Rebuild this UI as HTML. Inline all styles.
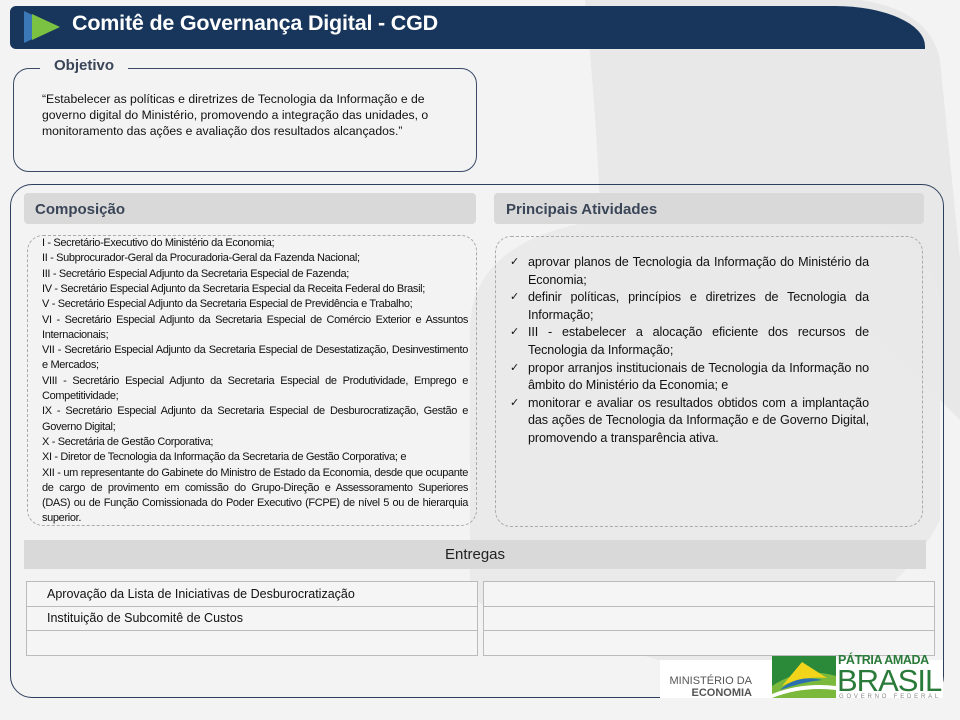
<!DOCTYPE html>
<html><head><meta charset="utf-8">
<style>
*{margin:0;padding:0;box-sizing:border-box}
body{width:960px;height:720px;overflow:hidden;background:#f3f3f3;font-family:"Liberation Sans",sans-serif;position:relative;color:#111}
.abs{position:absolute}
.hdr{left:10px;top:6px;width:915px;height:43px;background:#18365c;border-radius:6px 90px 0 6px / 6px 40px 0 6px}
.title{left:72px;top:11px;color:#fff;font-size:21.5px;font-weight:bold;letter-spacing:-0.2px}
.obj{left:13px;top:68px;width:464px;height:104px;border:1px solid #3a4a66;border-radius:16px}
.objlbl{left:40px;top:57px;background:#f3f3f3;padding:0 14px;font-weight:bold;font-size:15px;color:#3a4658}
.objtxt{left:42px;top:91px;width:425px;font-size:12.2px;line-height:16px}
.outer{left:10px;top:184px;width:934px;height:514px;border:1px solid #2e3f5e;border-radius:22px}
.bar{background:#d9d9d9;border-radius:4px;font-weight:bold;font-size:15px;color:#3a4658}
.dash{border:1px dashed #aaa;border-radius:16px}
.c{position:absolute;left:42px;width:426px;font-size:11px;line-height:15.3px;letter-spacing:-0.35px;text-align:justify;white-space:normal}
.act{left:528px;top:254px;width:341px;font-size:12.6px;line-height:17.6px;text-align:justify;letter-spacing:-0.1px}
.act div{position:relative}
.act div:before{content:"✓";position:absolute;left:-18px;font-size:11px}
table{border-collapse:collapse}
td{border:1.5px solid #bbb;height:24.5px;font-size:12.5px;padding-left:20px;background:#f5f5f5}
</style></head><body>
<svg class="abs" style="left:0;top:0" width="960" height="720">
<path d="M585 0 L860 0 Q930 10 940 60 L960 260 L960 420 Q920 380 870 330 L600 330 Q605 200 585 0Z" fill="#e8e8e8"/>
<path d="M470 330 Q470 240 600 220 L870 220 Q930 240 940 300 L940 520 Q890 620 720 680 L470 600Z" fill="#e9e9e9" opacity="0.9"/>
</svg>
<div class="abs hdr"></div>
<svg class="abs" style="left:22px;top:11px" width="42" height="32"><polygon points="2,0 36,16 2,32" fill="#3a78b8"/><polygon points="10,3 38,16 10,29" fill="#7cc242"/></svg>
<div class="abs title">Comitê de Governança Digital - CGD</div>
<div class="abs obj"></div>
<div class="abs objlbl">Objetivo</div>
<div class="abs objtxt">“Estabelecer as políticas e diretrizes de Tecnologia da Informação e de governo digital do Ministério, promovendo a integração das unidades, o monitoramento das ações e avaliação dos resultados alcançados.”</div>
<div class="abs outer"></div>
<div class="abs bar" style="left:24px;top:193px;width:452px;height:31px;padding:8px 11px">Composição</div>
<div class="abs bar" style="left:494px;top:193px;width:430px;height:31px;padding:8px 12px">Principais Atividades</div>
<div class="abs dash" style="left:27px;top:235px;width:450px;height:291px"></div>
<div class="abs dash" style="left:495px;top:236px;width:428px;height:291px"></div>
<div class="c" style="top:236px">I - Secretário-Executivo do Ministério da Economia;</div>
<div class="c" style="top:251.3px">II - Subprocurador-Geral da Procuradoria-Geral da Fazenda Nacional;</div>
<div class="c" style="top:266.6px">III - Secretário Especial Adjunto da Secretaria Especial de Fazenda;</div>
<div class="c" style="top:281.9px">IV - Secretário Especial Adjunto da Secretaria Especial da Receita Federal do Brasil;</div>
<div class="c" style="top:297.2px">V - Secretário Especial Adjunto da Secretaria Especial de Previdência e Trabalho;</div>
<div class="c" style="top:312.5px">VI - Secretário Especial Adjunto da Secretaria Especial de Comércio Exterior e Assuntos Internacionais;</div>
<div class="c" style="top:343.1px">VII - Secretário Especial Adjunto da Secretaria Especial de Desestatização, Desinvestimento e Mercados;</div>
<div class="c" style="top:373.7px">VIII - Secretário Especial Adjunto da Secretaria Especial de Produtividade, Emprego e Competitividade;</div>
<div class="c" style="top:404.3px">IX - Secretário Especial Adjunto da Secretaria Especial de Desburocratização, Gestão e Governo Digital;</div>
<div class="c" style="top:434.9px">X - Secretária de Gestão Corporativa;</div>
<div class="c" style="top:450.2px">XI - Diretor de Tecnologia da Informação da Secretaria de Gestão Corporativa; e</div>
<div class="c" style="top:465.5px">XII - um representante do Gabinete do Ministro de Estado da Economia, desde que ocupante de cargo de provimento em comissão do Grupo-Direção e Assessoramento Superiores (DAS) ou de Função Comissionada do Poder Executivo (FCPE) de nível 5 ou de hierarquia superior.</div>
<div class="abs act"><div>aprovar planos de Tecnologia da Informação do Ministério da Economia;</div><div>definir políticas, princípios e diretrizes de Tecnologia da Informação;</div><div>III - estabelecer a alocação eficiente dos recursos de Tecnologia da Informação;</div><div>propor arranjos institucionais de Tecnologia da Informação no âmbito do Ministério da Economia; e</div><div>monitorar e avaliar os resultados obtidos com a implantação das ações de Tecnologia da Informação e de Governo Digital, promovendo a transparência ativa.</div></div>
<div class="abs bar" style="left:24px;top:540px;width:902px;height:29px;border-radius:0;text-align:center;padding-top:6px;font-weight:normal;color:#222">Entregas</div>
<table class="abs" style="left:26px;top:581px;width:452px"><tr><td>Aprovação da Lista de Iniciativas de Desburocratização</td></tr><tr><td>Instituição de Subcomitê de Custos</td></tr><tr><td></td></tr></table>
<table class="abs" style="left:483px;top:581px;width:452px"><tr><td></td></tr><tr><td></td></tr><tr><td></td></tr></table>
<div class="abs" style="left:660px;top:660px;width:283px;height:38px;background:#fff"></div>
<div class="abs" style="left:660px;top:675px;font-size:11px;color:#555;text-align:right;width:92px;line-height:12px;white-space:nowrap">MINISTÉRIO DA<br><b>ECONOMIA</b></div>
<svg class="abs" style="left:772px;top:656px" width="64" height="42"><rect width="64" height="42" fill="#2a8a3a"/><path d="M0 30 Q30 10 64 20 L64 42 L0 42Z" fill="#7ab93b"/><path d="M10 30 L30 6 L55 22 Q30 20 10 30Z" fill="#f2d41a"/><path d="M8 34 Q25 18 50 24 Q30 26 8 34Z" fill="#2a6fb0"/><path d="M0 38 Q30 26 64 30 L64 34 Q30 30 0 42Z" fill="#fff"/></svg>
<div class="abs" style="left:838px;top:653px;color:#2a7a3a;font-weight:bold;font-size:12.5px;letter-spacing:-0.4px">PÁTRIA AMADA</div>
<div class="abs" style="left:837px;top:665px;color:#2a7a3a;font-size:31px;line-height:31px;letter-spacing:-1px">BRASIL</div>
<div class="abs" style="left:839px;top:694px;color:#888;font-size:6px;letter-spacing:2.8px">GOVERNO FEDERAL</div>
</body></html>
